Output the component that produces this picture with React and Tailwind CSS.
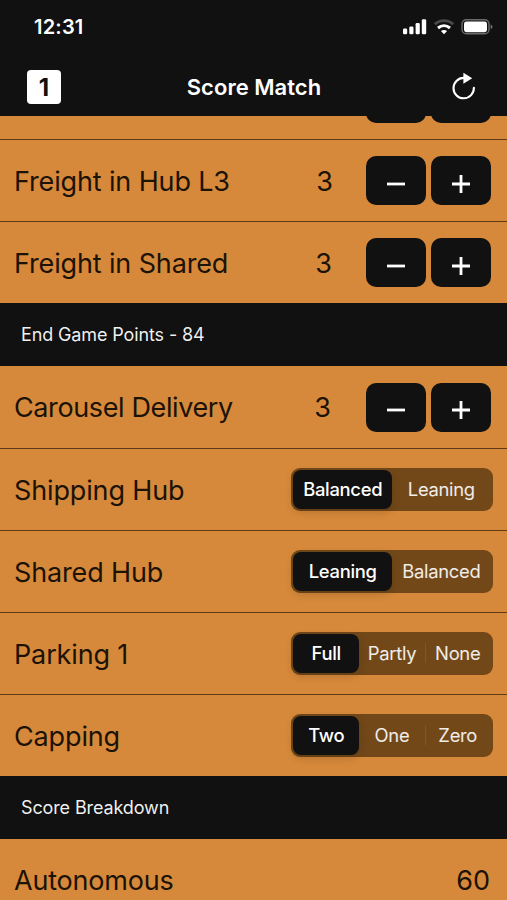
import { useState } from 'react'
import clsx from 'clsx'

const StatusBar = () => (
  <div className="flex h-[54px] items-center justify-between pl-[34px] pr-[14px]">
    <span className="text-[20px] font-semibold tracking-[0.2px]">12:31</span>
    <div className="flex items-center gap-[7px]">
      <svg width="25" height="16" viewBox="0 0 25 16" fill="#fff">
        <rect x="1" y="9.6" width="4.2" height="5.6" rx="1.3" />
        <rect x="7.3" y="7.4" width="4.2" height="7.8" rx="1.3" />
        <rect x="13.6" y="4" width="4.2" height="11.2" rx="1.3" />
        <rect x="19.8" y="0.2" width="4.4" height="15" rx="1.3" />
      </svg>
      <svg width="20" height="16" viewBox="0 0 20 16" fill="none">
        <path d="M0.8 5.2C6 0.4 14 0.4 19.2 5.2" stroke="#4b4b4b" strokeWidth="2.8" />
        <path d="M4 9C7.6 5.9 12.4 5.9 16 9" stroke="#fff" strokeWidth="3" />
        <path d="M6.9 12.1Q10 9.8 13.1 12.1L10 15.2Z" fill="#fff" />
      </svg>
      <svg width="32" height="16" viewBox="0 0 32 16" fill="none">
        <rect x="1" y="0.8" width="27" height="14" rx="4.2" stroke="#6b6b6b" strokeWidth="1.4" />
        <rect x="3" y="2.6" width="23" height="10.6" rx="2.4" fill="#fff" />
        <path d="M29.6 5.4Q31.6 6 31.6 7.8T29.6 10.2Z" fill="#6b6b6b" />
      </svg>
    </div>
  </div>
)

const NavBar = () => (
  <div className="flex h-[62px] items-start justify-between pl-[27px] pr-[31px] pt-4">
    <div className="flex size-[34px] items-center justify-center rounded-[4px] bg-white pt-px text-[24px] font-bold text-[#111]">1</div>
    <h1 className="pr-[3px] text-[22px] leading-[34px] font-semibold tracking-[0.03px]">Score Match</h1>
    <button aria-label="Reset">
      <svg width="26" height="32" viewBox="0 0 26 32" fill="none">
        <path d="M13.7 7.9A10.2 10.2 0 1 0 23.9 17.8" stroke="#fff" strokeWidth="2.1" strokeLinecap="round" />
        <path d="M13.4 2.8L22.2 8.3L13.4 13.8Z" fill="#fff" />
      </svg>
    </button>
  </div>
)

const Section = ({ title }) => (
  <h2 className="flex h-[63px] items-center bg-[#111] pl-[21px] text-[18px] tracking-[-0.12px] text-white/95">{title}</h2>
)

const Row = ({ label, first, labelClass = 'tracking-[-0.14px]', children }) => (
  <div className={clsx('flex h-[82px] items-center border-[#5f3a14] pl-[14px]', !first && 'border-t')}>
    <span className={clsx('flex-1 pt-[3px] text-[27px] whitespace-nowrap', labelClass)}>{label}</span>
    {children}
  </div>
)

const StepButton = ({ label, onClick, children }) => (
  <button aria-label={label} onClick={onClick}
    className="flex h-[49px] w-[60px] items-center justify-center rounded-[10px] bg-[#111] pt-[6px]">
    <svg width="18" height="18" viewBox="0 0 18 18" stroke="#fff" strokeWidth="2.8">{children}</svg>
  </button>
)

const Stepper = ({ value, onChange }) => (
  <div className="flex gap-[5px] pr-4">
    <StepButton label="Decrease" onClick={() => onChange(Math.max(0, value - 1))}>
      <path d="M0 9H18" />
    </StepButton>
    <StepButton label="Increase" onClick={() => onChange(value + 1)}>
      <path d="M0 9H18M9 0V18" />
    </StepButton>
  </div>
)

const CounterRow = ({ label, valueClass, ...props }) => {
  const [value, setValue] = useState(3)
  return (
    <Row label={label} {...props}>
      <span className={clsx('pt-[3px] text-[27px]', valueClass)}>{value}</span>
      <Stepper value={value} onChange={setValue} />
    </Row>
  )
}

const SegmentRow = ({ label, options }) => {
  const [selected, setSelected] = useState(0)
  return (
    <Row label={label}>
      <div className="mr-[14px] flex h-[43px] w-[202px] rounded-[9px] bg-[#724819] p-[2.4px] text-[18.4px] tracking-[-0.3px]">
        {options.map((o, i) => (
          <button key={o} onClick={() => setSelected(i)}
            className={clsx('relative flex flex-1 basis-0 items-center justify-center rounded-[8px] text-white',
              i === selected ? 'bg-[#111] font-medium shadow-[0_3px_9px_rgba(0,0,0,0.16)]' : 'text-white/90')}>
            {i > 0 && i - 1 !== selected && i !== selected && (
              <span className="absolute top-[9px] left-0 h-5 w-px bg-[#84552a]" />
            )}
            {o}
          </button>
        ))}
      </div>
    </Row>
  )
}

export default function App() {
  return (
    <div className="flex h-[900px] w-[507px] flex-col overflow-hidden bg-[#d6893a] font-[Inter,sans-serif] text-[#1c1206]">
      <header className="h-[116px] shrink-0 bg-[#111] text-white">
        <StatusBar />
        <NavBar />
      </header>

      <main className="h-[784px] overflow-hidden">
        {/* row scrolled under the header, only its bottom edge shows */}
        <div className="flex h-[23px] flex-col justify-end overflow-hidden">
          <div className="flex h-[82px] shrink-0 items-center justify-end">
            <Stepper value={0} onChange={() => {}} />
          </div>
        </div>
        <CounterRow label="Freight in Hub L3" valueClass="mr-[33px]" />
        <CounterRow label="Freight in Shared" valueClass="mr-[34px]" />
        <Section title="End Game Points - 84" />
        <CounterRow first label="Carousel Delivery" labelClass="tracking-[-0.38px]" valueClass="mr-[35px]" />
        <SegmentRow label="Shipping Hub" options={['Balanced', 'Leaning']} />
        <SegmentRow label="Shared Hub" options={['Leaning', 'Balanced']} />
        <SegmentRow label="Parking 1" options={['Full', 'Partly', 'None']} />
        <SegmentRow label="Capping" options={['Two', 'One', 'Zero']} />
        <Section title="Score Breakdown" />
        <Row first label="Autonomous" labelClass="tracking-[-0.2px]">
          <span className="pt-[3px] pr-[17px] text-[27px]">60</span>
        </Row>
      </main>
    </div>
  )
}
